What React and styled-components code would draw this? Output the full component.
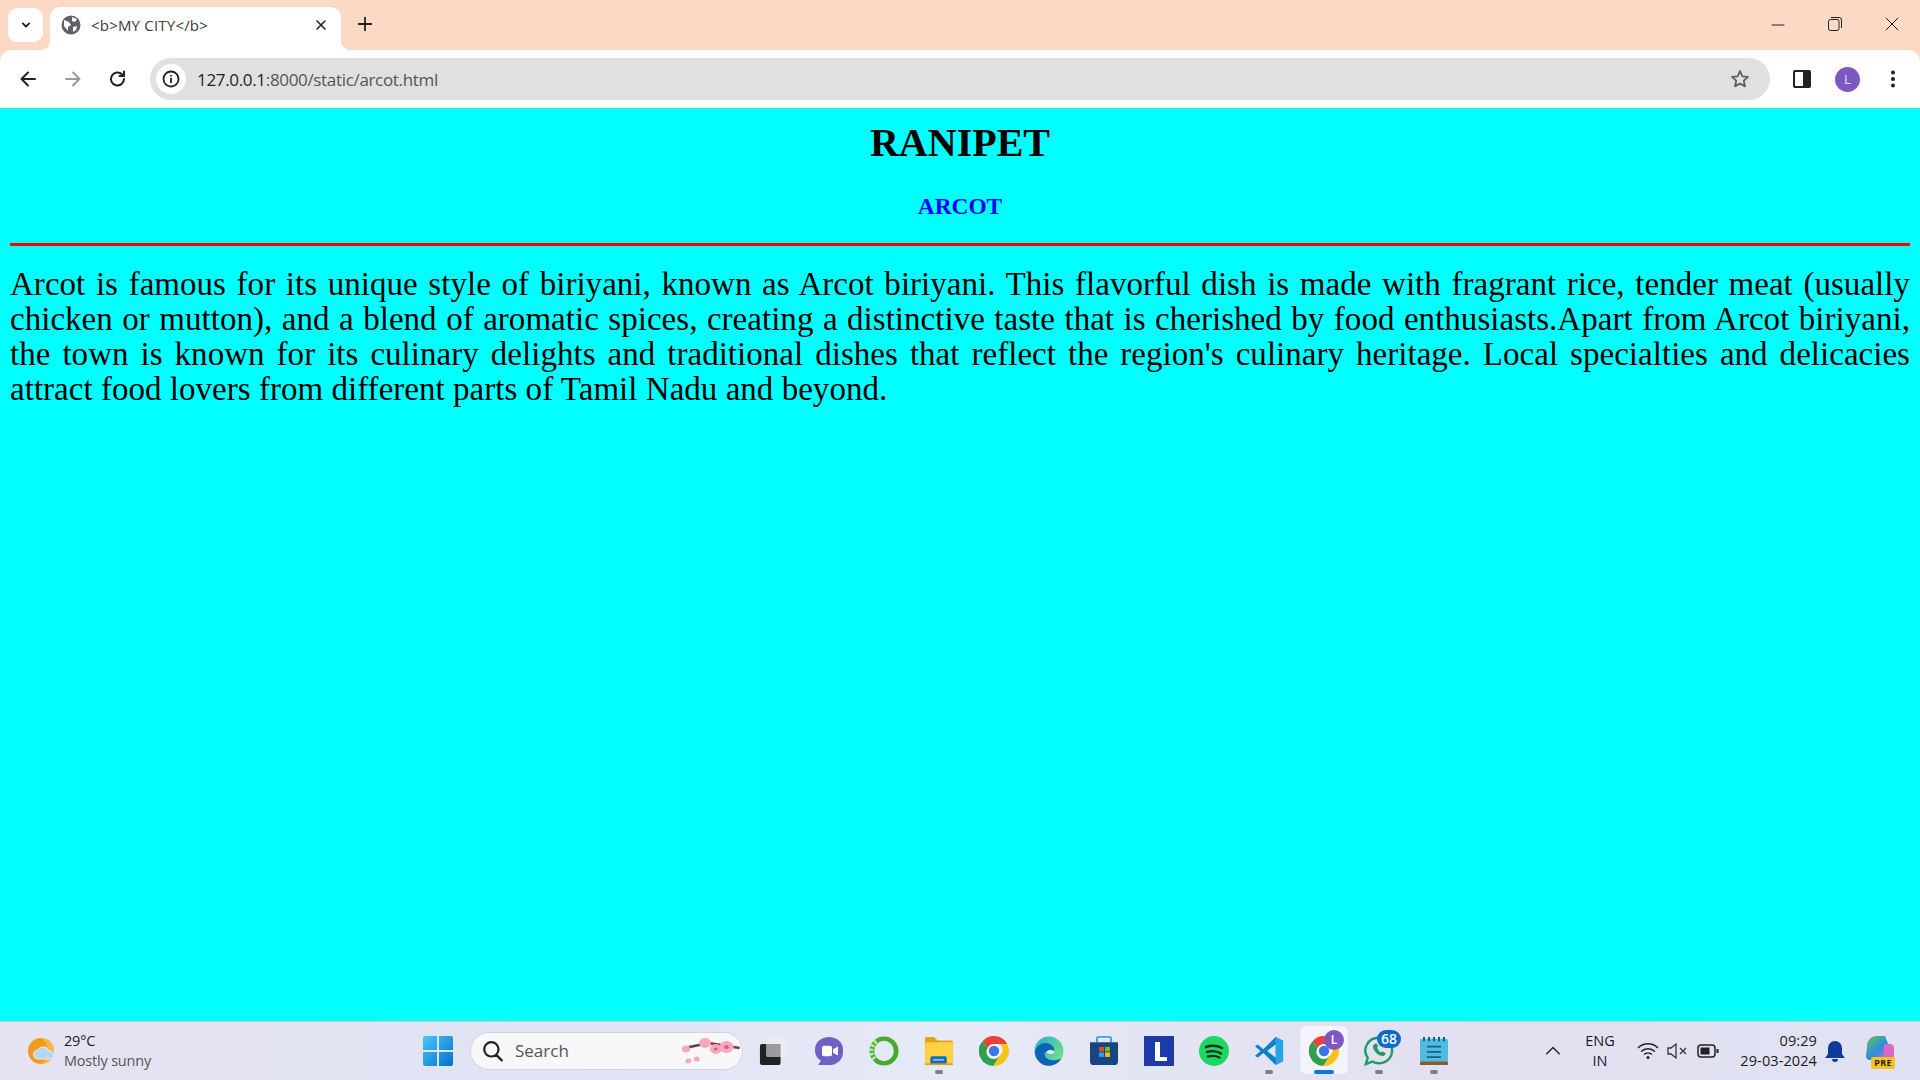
import React from "react";
import styled, { createGlobalStyle } from "styled-components";

const Global = createGlobalStyle`
  html, body { margin: 0; padding: 0; height: 100%; overflow: hidden; }
  #root { height: 100%; }
`;
const Screen = styled.div`
  width: 1920px; height: 1080px; display: flex; flex-direction: column; overflow: hidden;
  font-family: "Segoe UI", "Open Sans", "Noto Sans", sans-serif;
`;
const TabStrip = styled.div`
  height: 50px; flex: none; background: #fcd9c5; display: flex; align-items: flex-end; padding-left: 8px;
`;
const TabListButton = styled.div`
  width: 35px; height: 34px; margin-bottom: 8px; border-radius: 9px; background: #fff;
  display: flex; align-items: center; justify-content: center; flex: none;
`;
const Tab = styled.div`
  position: relative; width: 291px; height: 43px; margin-left: 7px; background: #fff; border-radius: 10px 10px 0 0;
  display: flex; align-items: center; padding: 0 12px 7px 11px; box-sizing: border-box; flex: none;
  &::before, &::after { content: ""; position: absolute; bottom: 0; width: 10px; height: 10px; background: radial-gradient(circle at var(--cx) 0, transparent 10px, #fff 10.5px); }
  &::before { left: -10px; --cx: 0; }
  &::after { right: -10px; --cx: 100%; }
`;
const TabTitle = styled.span`
  flex: 1; margin-left: 10px; font-size: 15px; color: #3c3c3c; font-family: "Open Sans", sans-serif; letter-spacing: 0.2px;
`;
const NewTab = styled.div`
  width: 28px; margin-left: 10px; margin-bottom: 12px; height: 28px; display: flex; align-items: center; justify-content: center; flex: none;
`;
const WindowControls = styled.div`
  margin-left: auto; align-self: flex-start; display: flex; height: 48px; align-items: center; padding-right: 0;
`;
const WindowControl = styled.div`
  width: 57px; display: flex; justify-content: center;
`;
const Toolbar = styled.div`
  height: 58px; flex: none; background: #fcd9c5; display: flex;
`;
const ToolbarInner = styled.div`
  flex: 1; background: #fff; border-radius: 12px 12px 0 0; display: flex; align-items: center; padding: 0 14px 0 10px;
`;
const NavButton = styled.div`
  width: 45px; display: flex; justify-content: center; flex: none;
`;
const NavGroup = styled.div`
  display: flex; width: 145px; flex: none; margin-left: -5px;
`;
const Omnibox = styled.div`
  width: 1620px; height: 42px; background: #e0e0e0; border-radius: 21px; display: flex; align-items: center; padding: 0 20px 0 6px; box-sizing: border-box; flex: none;
`;
const InfoBadge = styled.div`
  width: 30px; height: 30px; border-radius: 50%; background: #fff; display: flex; align-items: center; justify-content: center; flex: none;
`;
const Url = styled.div`
  flex: 1; margin-left: 11px; font-size: 17px; color: #555; letter-spacing: -0.33px; font-family: "Open Sans", sans-serif;
`;
const UrlHost = styled.span` color: #1f1f1f; `;
const ToolbarRight = styled.div`
  flex: 1; display: flex; align-items: center; padding-left: 22px; gap: 23px;
`;
const Avatar = styled.div`
  width: 25px; height: 25px; border-radius: 50%; background: #7e57c2; color: #e8def8; display: flex; align-items: center; justify-content: center; font-size: 13px; font-family: "Open Sans", sans-serif; flex: none;
`;
const Page = styled.main`
  flex: 1; background: #00ffff; border-top: 1px solid #3fe3e3; padding: 0 10px; font-family: "Liberation Serif", "Times New Roman", serif; color: #000; overflow: hidden;
`;
const Title = styled.h1`
  margin: 11px 0 0; text-align: center; font-size: 40px; line-height: 46px; font-weight: 700;
`;
const Subtitle = styled.h3`
  margin: 27px 0 0; text-align: center; font-size: 23.4px; line-height: 27px; font-weight: 700; color: #0000ff;
`;
const Rule = styled.hr`
  margin: 23px 0 0; border: 0; height: 3px; background: #ff0000;
`;
const Body = styled.p`
  margin: 21px 0 0; font-size: 33px; line-height: 35px; letter-spacing: 0.03px; text-align: justify;
`;
const Taskbar = styled.footer`
  height: 59px; flex: none; box-sizing: border-box; border-top: 1px solid #c8ccd8; padding-bottom: 1px;
  background: linear-gradient(90deg, #e6e3f2 0%, #e0e4f5 30%, #e6e9f6 50%, #e2e0f1 75%, #e0e2f3 100%);
  display: flex; align-items: center; position: relative;
`;
const Weather = styled.div`
  width: 423px; flex: none; display: flex; align-items: center; padding-left: 27px; box-sizing: border-box;
`;
const WeatherText = styled.div`
  margin-left: 7px; font-size: 14.5px; line-height: 20px; color: #1c1c1c; letter-spacing: -0.2px; font-family: "Open Sans", sans-serif;
`;
const WeatherSub = styled.div` color: #555; `;
const Slot = styled.div`
  width: 55px; height: 100%; flex: none; display: flex; align-items: center; justify-content: center; position: relative;
`;
const ActiveSlot = styled(Slot)`
  &::before { content: ""; position: absolute; left: 4px; right: 3px; top: 4px; bottom: 5px; border-radius: 5px; background: #f3f4fb; box-shadow: 0 0 1px #c9cbdc; }
  & > svg { position: relative; }
`;
const Dot = styled.span`
  position: absolute; bottom: 5px; left: 50%; margin-left: ${p => -(p.$w || 8) / 2}px; width: ${p => p.$w || 8}px; height: 4px; border-radius: 2px; background: ${p => p.$c || "#7c7f88"};
`;
const Badge = styled.span`
  position: absolute; top: 8px; left: ${p => p.$l}px; width: ${p => p.$w}px; height: ${p => p.$h}px; border-radius: 10px; background: ${p => p.$c};
  color: #fff; font-size: ${p => p.$f}px; line-height: ${p => p.$h}px; text-align: center; font-family: "Open Sans", sans-serif; font-weight: 600;
`;
const Search = styled.div`
  width: 273px; height: 38px; margin: 0 3px 0 17px; flex: none; box-sizing: border-box; border-radius: 19px; background: #f8f8fb; border: 1px solid #d4d5dc;
  display: flex; align-items: center; padding-left: 11px; font-size: 17px; color: #555; font-family: "Open Sans", sans-serif;
`;
const SearchLabel = styled.span` margin-left: 11px; flex: 1; `;
const Tray = styled.div`
  flex: 1; display: flex; align-items: center; padding-left: 84px; color: #1c1c1c; font-family: "Open Sans", sans-serif;
`;
const Lang = styled.div`
  width: 62px; margin-left: 8px; text-align: center; font-size: 14.5px; line-height: 20px; flex: none;
`;
const TrayIcons = styled.div`
  display: flex; align-items: center; gap: 8px; margin-left: 6px; flex: none;
`;
const Battery = styled.svg` margin-left: 2px; `;
const Clock = styled.div`
  width: 90px; margin-left: 8px; text-align: right; font-size: 14.5px; line-height: 20px; flex: none; letter-spacing: 0.1px;
`;
const Bell = styled.svg` margin-left: 8px; flex: none; `;
const CopilotWrap = styled.div`
  position: relative; margin-left: 19px; width: 32px; height: 34px; flex: none;
`;
const PreTag = styled.span`
  position: absolute; left: 7px; bottom: -1px; width: 24px; height: 12px; border-radius: 2px; background: #f5c518; color: #222;
  font-size: 9px; line-height: 12px; font-weight: 700; text-align: center; letter-spacing: 0.3px;
`;

const Stroke = ({ d, c = "#222", w = 2, s = 20, vb = 20, className }) => (
  <svg className={className} width={s} height={s} viewBox={`0 0 ${vb} ${vb}`} fill="none" stroke={c} strokeWidth={w} strokeLinecap="round" strokeLinejoin="round"><path d={d} /></svg>
);
const IconBox = ({ vb, children }) => (
  <svg width="30" height="30" viewBox={vb} preserveAspectRatio="none">{children}</svg>
);

const Windows = () => (
  <svg width="30" height="30" viewBox="0 0 30 30">
    <defs><linearGradient id="w" x1="0" y1="0" x2="1" y2="1"><stop offset="0" stopColor="#4cc6f7" /><stop offset="1" stopColor="#0071cf" /></linearGradient></defs>
    <path d="M0 2a2 2 0 0 1 2-2h12v14H0zM16 0h12a2 2 0 0 1 2 2v12H16zM0 16h14v14H2a2 2 0 0 1-2-2zM16 16h14v12a2 2 0 0 1-2 2H16z" fill="url(#w)" />
  </svg>
);
const WeatherIcon = () => (
  <svg width="30" height="30" viewBox="0 0 30 30">
    <circle cx="14" cy="15" r="13" fill="#f09a1e" />
    <path d="M14 2a13 13 0 0 1 0 26 16 16 0 0 0 0-26z" fill="#f7b93d" />
    <path d="M11 23a4.500 4.500 0 0 1 0-9 6 6 0 0 1 11 1 4 4 0 0 1 1 8z" fill="#b9d6f2" stroke="#e4f0fa" />
  </svg>
);
const TaskView = () => (
  <IconBox vb="0 0 32 30">
    <rect x="1" y="8" width="22" height="21" rx="2" fill="#222" />
    <rect x="8" y="1" width="22" height="20" rx="2" fill="#ecebf1" />
    <rect x="8" y="8" width="15" height="13" fill="#9b9b9e" />
  </IconBox>
);
const Teams = () => (
  <IconBox vb="0 0 30 34">
    <path d="M15 1a14 14 0 0 1 14 14v4a14 14 0 0 1-14 14H4l3-5a14 14 0 0 1-6-11v-2A14 14 0 0 1 15 1z" fill="#6f5fc6" />
    <rect x="8" y="11" width="10" height="12" rx="2" fill="#fff" /><path d="M19 15l5-3v10l-5-3z" fill="#fff" />
  </IconBox>
);
const Ring = () => (
  <IconBox vb="0 0 32 34">
    <ellipse cx="16" cy="17" rx="13" ry="14" fill="none" stroke="#43ad2b" strokeWidth="5" />
    <path d="M8 6A13 13 0 0 0 6 26" fill="none" stroke="#bfe3b0" strokeWidth="5" strokeDasharray="3 2" />
  </IconBox>
);
const Files = () => (
  <IconBox vb="0 0 33 34">
    <path d="M1 3a2 2 0 0 1 2-2h8l4 4h15a2 2 0 0 1 2 2v4H1z" fill="#e0a216" />
    <rect x="1" y="7" width="31" height="26" rx="2" fill="#fdd046" />
    <path d="M7 33v-8a2 2 0 0 1 2-2h14a2 2 0 0 1 2 2v8z" fill="#0f6cbd" /><rect x="10" y="26" width="12" height="2" fill="#7cc4f0" />
    <rect x="1" y="31" width="31" height="2" fill="#e0a216" />
  </IconBox>
);
const Chrome = () => (
  <IconBox vb="0 1 32 32">
    <path d="M16 1a16 16 0 0 1 14 8.500H16a7.500 7.500 0 0 0-7 4.500L3.800 6.500A16 16 0 0 1 16 1z" fill="#ea4335" />
    <path d="M30 9.500A16 16 0 0 1 15 33l7-11a7.500 7.500 0 0 0 0-12.500z" fill="#fbc116" />
    <path d="M3.800 6.500L9 14a7.500 7.500 0 0 0 13 8l-7 11A16 16 0 0 1 3.800 6.500z" fill="#2f9e4f" />
    <circle cx="16" cy="17" r="7" fill="#fff" /><circle cx="16" cy="17" r="5.600" fill="#3b78e7" />
  </IconBox>
);
const Edge = () => (
  <IconBox vb="0 1 32 32">
    <defs><linearGradient id="e" x1="0" y1="0" x2="1" y2=".6"><stop offset="0" stopColor="#2aa7d6" /><stop offset="1" stopColor="#6fe08a" /></linearGradient></defs>
    <circle cx="16" cy="17" r="15.500" fill="url(#e)" />
    <path d="M1 18C3 9 13 6 19 11c3 2 3 5 1 7h-8c-3 6 6 12 17 7-5 9-17 10-23 4-3-3-5-7-5-11z" fill="#0c63b4" />
    <path d="M13 18c3-3 6-3 9 0-1 3-7 3-9 0z" fill="#e0e4f5" />
  </IconBox>
);
const Store = () => (
  <IconBox vb="0 1 30 33">
    <path d="M8 8V4a2 2 0 0 1 2-2h10a2 2 0 0 1 2 2v4" fill="none" stroke="#2fa8ea" strokeWidth="2" />
    <path d="M1 8h28v21a4 4 0 0 1-4 4H5a4 4 0 0 1-4-4z" fill="#17457f" />
    <rect x="10" y="13" width="5" height="5" fill="#e8452e" /><rect x="16" y="13" width="5" height="5" fill="#7bb81f" />
    <rect x="10" y="19" width="5" height="5" fill="#1fa2ea" /><rect x="16" y="19" width="5" height="5" fill="#fdb913" />
  </IconBox>
);
const LApp = () => (
  <IconBox vb="0 0 30 30">
    <rect width="30" height="30" fill="#1c3aa9" />
    <path d="M11 6h5v15h7v4H11z" fill="#fff" />
  </IconBox>
);
const Spotify = () => (
  <IconBox vb="0 0 30 30">
    <circle cx="15" cy="15" r="15" fill="#1ed760" />
    <path d="M7 11c6-2 11-1.500 16 1M8 16c5-1.500 10-1 14 1.500M9 20.500c4-1 8-.7 11.500 1" stroke="#14311f" strokeWidth="2.400" strokeLinecap="round" fill="none" />
  </IconBox>
);
const VSCode = () => (
  <IconBox vb="0 0 32 32">
    <path d="M23 1l8 4v22l-8 4L10 18l-6 5-3-2 6-5-6-5 3-2 6 5z" fill="#0e80c8" />
    <path d="M23 1l8 4v22l-8 4z" fill="#28a3ea" /><path d="M23 9l-9 7 9 7z" fill="#e2e4f4" />
  </IconBox>
);
const WhatsApp = () => (
  <IconBox vb="0 1 32 33">
    <path d="M16 3a14 14 0 0 1 0 28 14 14 0 0 1-7-2l-7 3 2-7a14 14 0 0 1 12-22z" fill="none" stroke="#1f9d63" strokeWidth="2.600" />
    <path d="M11 10c-2 1-2 4 0 7s5 6 9 6c2 0 3-2 3-3l-3-2-2 1c-2-1-3-3-4-5l1-2-2-3z" fill="#1f9d63" />
  </IconBox>
);
const Notepad = () => (
  <IconBox vb="0 0 30 34">
    <rect x="1" y="3" width="28" height="27" rx="2" fill="#4ebbe0" />
    <rect x="1" y="29" width="28" height="4" rx="1" fill="#8a5a34" />
    <path d="M5 1v5M10 1v5M15 1v5M20 1v5M25 1v5" stroke="#17607e" strokeWidth="2" />
    <path d="M8 12h14M8 18h14M8 24h14" stroke="#17607e" strokeWidth="2" />
  </IconBox>
);
const Sakura = () => (
  <svg width="62" height="32" viewBox="10 0 52 32" preserveAspectRatio="none">
    <path d="M14 13L34 8l26 5" stroke="#6b3f35" strokeWidth="2.500" fill="none" />
    <g fill="#f7a8bd"><circle cx="15" cy="14" r="3.500" /><circle cx="31" cy="8" r="5" /><circle cx="40" cy="14" r="5" /><circle cx="49" cy="12" r="6" /><circle cx="17" cy="26" r="2.500" /><circle cx="24" cy="24" r="2.500" /></g>
    <g fill="#e9587f"><circle cx="40" cy="14" r="1.500" /><circle cx="49" cy="12" r="2" /></g>
  </svg>
);
const Copilot = () => (
  <svg width="32" height="30" viewBox="0 0 32 30">
    <defs><linearGradient id="c1" x1="0" y1="0" x2="1" y2="1"><stop offset="0" stopColor="#66c64c" /><stop offset=".5" stopColor="#2a8fe0" /><stop offset="1" stopColor="#e76bc2" /></linearGradient></defs>
    <path d="M11 2h10l8 20a3 3 0 0 1-3 4H6a4 4 0 0 1-4-4l1-10a10 10 0 0 1 8-10z" fill="url(#c1)" />
    <path d="M20 10h6a4 4 0 0 1 4 4v7a4 4 0 0 1-4 4h-7z" fill="#d968c9" />
  </svg>
);

export default function App() {
  return (
    <Screen>
      <Global />
      <TabStrip>
        <TabListButton><Stroke d="M6 8l4 4 4-4" w={2.400} s={16} /></TabListButton>
        <Tab>
          <svg width="20" height="20" viewBox="0 0 20 20"><circle cx="10" cy="10" r="9.500" fill="#5f6368" /><path d="M3 5l5 2 2 3-3 2v4L3 11zM11 2l5 2-2 3-3-1zM12 12l4-1-1 4-3 2z" fill="#fff" /></svg>
          <TabTitle>&lt;b&gt;MY CITY&lt;/b&gt;</TabTitle>
          <Stroke d="M5 5l10 10M15 5L5 15" w={2} s={16} />
        </Tab>
        <NewTab><Stroke d="M10 3v14M3 10h14" w={2} s={18} /></NewTab>
        <WindowControls>
          <WindowControl><Stroke d="M1 8h12" w={1} s={14} vb={14} /></WindowControl>
          <WindowControl><svg width="14" height="14" viewBox="0 0 14 14" fill="none" stroke="#222"><rect x=".5" y="2.500" width="10.500" height="11" rx="2" /><path d="M3 .5h8a2.500 2.500 0 0 1 2.500 2.500v8" /></svg></WindowControl>
          <WindowControl><Stroke d="M1 1l12 12M13 1L1 13" w={1} s={14} vb={14} /></WindowControl>
        </WindowControls>
      </TabStrip>
      <Toolbar>
        <ToolbarInner>
          <NavGroup>
            <NavButton><Stroke d="M17 10H4M10 3.500L3.500 10l6.500 6.500" w={2} /></NavButton>
            <NavButton><Stroke d="M3 10h13M10 3.500l6.500 6.500-6.500 6.500" c="#9a9a9a" w={2} /></NavButton>
            <NavButton><Stroke d="M16 10a6.500 6.500 0 1 1-2-4.700L16 7M16 2.500V7h-4.500" w={2} /></NavButton>
          </NavGroup>
          <Omnibox>
            <InfoBadge><svg width="18" height="18" viewBox="0 0 18 18" fill="none" stroke="#222" strokeWidth="1.800"><circle cx="9" cy="9" r="7.500" /><path d="M9 8v5M9 5v1.600" /></svg></InfoBadge>
            <Url><UrlHost>127.0.0.1</UrlHost>:8000/static/arcot.html</Url>
            <Stroke d="M10 2l2.400 5.300 5.600.6-4.200 3.800 1.200 5.700L10 14.500l-5 2.900 1.200-5.700L2 7.900l5.600-.6z" c="#5f5f5f" w={1.800} />
          </Omnibox>
          <ToolbarRight>
            <svg width="20" height="20" viewBox="0 0 20 20"><rect x="1" y="1" width="18" height="18" rx="2" fill="#222" /><rect x="3" y="3" width="8" height="14" fill="#fff" /></svg>
            <Avatar>L</Avatar>
            <svg width="20" height="20" viewBox="0 0 20 20" fill="#222"><circle cx="10" cy="3.500" r="2" /><circle cx="10" cy="10" r="2" /><circle cx="10" cy="16.500" r="2" /></svg>
          </ToolbarRight>
        </ToolbarInner>
      </Toolbar>
      <Page>
        <Title>RANIPET</Title>
        <Subtitle>ARCOT</Subtitle>
        <Rule />
        <Body>
          Arcot is famous for its unique style of biriyani, known as Arcot biriyani. This flavorful dish is made with fragrant rice, tender meat (usually chicken or mutton), and a blend of aromatic spices, creating a distinctive taste that is cherished by food enthusiasts.Apart from Arcot biriyani, the town is known for its culinary delights and traditional dishes that reflect the region's culinary heritage. Local specialties and delicacies attract food lovers from different parts of Tamil Nadu and beyond.
        </Body>
      </Page>
      <Taskbar>
        <Weather>
          <WeatherIcon />
          <WeatherText>29°C<WeatherSub>Mostly sunny</WeatherSub></WeatherText>
        </Weather>
        <Windows />
        <Search>
          <Stroke d="M8.500 2a6.500 6.500 0 1 0 0 13 6.500 6.500 0 0 0 0-13zM13 13.500l5 5" w={2} s={22} />
          <SearchLabel>Search</SearchLabel>
          <Sakura />
        </Search>
        <Slot><TaskView /></Slot>
        <Slot><Teams /></Slot>
        <Slot><Ring /></Slot>
        <Slot><Files /><Dot /></Slot>
        <Slot><Chrome /></Slot>
        <Slot><Edge /></Slot>
        <Slot><Store /></Slot>
        <Slot><LApp /></Slot>
        <Slot><Spotify /></Slot>
        <Slot><VSCode /><Dot /></Slot>
        <ActiveSlot><Chrome /><Badge $c="#7e57c2" $l={28} $w={20} $h={20} $f={12}>L</Badge><Dot $w={20} $c="#0a78d4" /></ActiveSlot>
        <Slot><WhatsApp /><Badge $c="#0a6cc9" $l={26} $w={24} $h={18} $f={14}>68</Badge><Dot /></Slot>
        <Slot><Notepad /><Dot /></Slot>
        <Tray>
          <Stroke d="M2 12l7-7 7 7" w={1.600} s={16} vb={18} />
          <Lang>ENG<br />IN</Lang>
          <TrayIcons>
            <svg width="22" height="18" viewBox="0 0 22 18" fill="none" stroke="#222" strokeWidth="1.500"><path d="M1 6a14 14 0 0 1 20 0M4 9.500a10 10 0 0 1 14 0M7 12.500a6 6 0 0 1 8 0" /><circle cx="11" cy="15.500" r="1.500" fill="#222" stroke="none" /></svg>
            <svg width="20" height="18" viewBox="0 0 20 18" fill="none" stroke="#333" strokeWidth="1.300"><path d="M1 6v6h3l5 4V2L4 6zM13 6l6 6M19 6l-6 6" /></svg>
            <Battery width="22" height="14" viewBox="0 0 22 14" fill="none" stroke="#222" strokeWidth="1.500"><rect x="1" y="1" width="17" height="12" rx="3" /><rect x="3.500" y="3.500" width="9" height="7" fill="#222" stroke="none" /><path d="M20.500 5v4" strokeWidth="2" /></Battery>
          </TrayIcons>
          <Clock>09:29<br />29-03-2024</Clock>
          <Bell width="20" height="24" viewBox="0 0 20 24"><path d="M10 2a7 7 0 0 1 7 7v6l3 4H0l3-4V9a7 7 0 0 1 7-7z" fill="#0d3a9b" /><path d="M7 20a3 3 0 0 0 6 0z" fill="#0d3a9b" /></Bell>
          <CopilotWrap><Copilot /><PreTag>PRE</PreTag></CopilotWrap>
        </Tray>
      </Taskbar>
    </Screen>
  );
}
